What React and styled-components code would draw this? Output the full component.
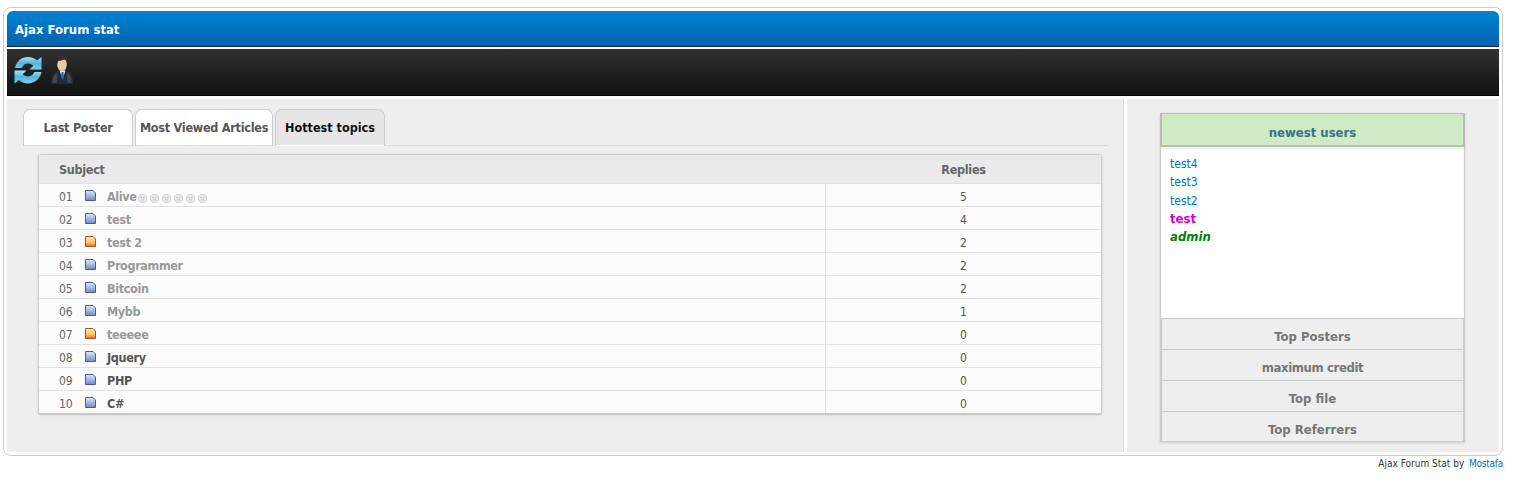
import React from "react";
import styled, { createGlobalStyle } from "styled-components";

const Global = createGlobalStyle`
  html, body { margin: 0; padding: 0; background: #fff; }
  body { font-family: "DejaVu Sans", "Liberation Sans", sans-serif; font-stretch: condensed; font-size: 12px; color: #555; }
`;
const Page = styled.div`width: 1500px; margin: 7px 0 0 3px;`;
const Frame = styled.div`
  border: 1px solid #ccc; border-radius: 8px; padding: 3px; background: #fff;
  box-sizing: border-box; height: 449px; display: flex; flex-direction: column;
`;
const Header = styled.div`
  height: 35px; border-bottom: 1px solid #0a2a40; border-radius: 6px 6px 0 0;
  background: linear-gradient(#0083d6, #0063ad); color: #fff; font-weight: bold; font-size: 13px;
  line-height: 37px; padding-left: 8px; flex: none;
`;
const Toolbar = styled.div`
  height: 40px; margin-top: 2px; flex: none; border-bottom: 1px solid #000;
  background: linear-gradient(#303030 0%, #262626 35%, #1c1c1c 60%, #141414 100%);
  display: flex; align-items: flex-start; padding: 6px 0 0 6px; gap: 8px;
`;
const Content = styled.div`margin-top: 3px; flex: 1; display: flex; min-height: 0;`;
const Main = styled.div`
  background: #eee; border-right: 1px solid #ddd; padding: 10px 15px 0 16px; box-sizing: border-box; width: 1117px; flex: none;
`;
const TabBar = styled.div`
  display: flex; gap: 2px; height: 36px; border-bottom: 1px solid #ddd; align-items: flex-end;
`;
const Tab = styled.div`
  box-sizing: border-box; width: ${p => p.$w}px; height: 37px; margin-bottom: -1px;
  border: 1px solid #ccc; border-bottom: ${p => (p.$active ? "1px solid #fff" : "1px solid #ddd")}; border-radius: 7px 7px 0 0;
  background: ${p => (p.$active ? "#e6e6e6" : "#fff")}; color: ${p => (p.$active ? "#111" : "#555")};
  font-weight: bold; font-size: 12.5px; letter-spacing: ${p => (p.$active ? "0" : "-0.25px")}; line-height: 36px; text-align: center; white-space: nowrap;
`;
const Table = styled.div`
  margin: 8px 0 0 15px; width: 1064px; box-sizing: border-box; border: 1px solid #ccc; border-radius: 3px;
  box-shadow: 0 1px 2px #bbb; background: #fcfcfc;
`;
const Head = styled.div`
  display: flex; height: 28px; background: #eaeaea; font-weight: bold; font-size: 12.5px; letter-spacing: -0.3px; color: #666; line-height: 29px;
`;
const SubjectHead = styled.div`width: 787px; padding-left: 20px; box-sizing: border-box; flex: none;`;
const RepliesHead = styled.div`flex: 1; text-align: center;`;
const Row = styled.div`
  display: flex; height: 23px; box-sizing: border-box; border-top: 1px solid #e2e2e2; line-height: 26px;
  background: #fcfcfc;
`;
const Subject = styled.div`
  width: 787px; flex: none; box-sizing: border-box; padding-left: 20px; display: flex; align-items: flex-start; border-right: 1px solid #e2e2e2;
`;
const Num = styled.span`width: 26px; flex: none; color: #666; font-size: 12px;`;
const Title = styled.span`
  margin-left: 11px; font-weight: bold; font-size: 12.5px; letter-spacing: -0.35px; color: ${p => (p.$visited ? "#999" : "#555")};
`;
const Count = styled.div`flex: 1; text-align: center; color: #555; font-size: 12px;`;
const Smileys = styled.span`display: inline-flex; gap: 3px; margin: 10px 0 0 1px;`;
const Side = styled.div`
  margin-left: 3px; flex: 1; background: #eee; padding: 14px 34px 0 33px;
`;
const Box = styled.div`width: 305px; box-sizing: border-box; box-shadow: 0 1px 2px #ccc;`;
const BoxHead = styled.div`
  height: 34px; box-sizing: border-box; border: 2px solid #bbb; border-width: 1px 2px 2px; background: #ceebc6; color: #3f7085; font-weight: bold; font-size: 13px;
  text-align: center; line-height: 37px;
`;
const BoxBody = styled.div`
  height: 171px; box-sizing: border-box; background: #fff; border: 1px solid #ccc; border-width: 0 1px; padding: 8px 9px;
  display: flex; flex-direction: column; box-shadow: inset 0 2px 2px #eee;
`;
const UserLink = styled.a`
  height: 18.3px; line-height: 18px; font-size: ${p => (p.$color ? "13px" : "12px")}; color: ${p => p.$color || "#0072bc"};
  font-weight: ${p => (p.$color ? "bold" : "normal")}; font-style: ${p => (p.$italic ? "italic" : "normal")};
`;
const Item = styled.div`
  height: 31px; box-sizing: border-box; background: #eee; border: 1px solid #ccc; border-width: 1px 2px 0; color: #777;
  font-weight: bold; font-size: 13px; letter-spacing: ${p => (p.$tight ? "-0.4px" : "0")}; text-align: center; line-height: 35px;
  &:last-child { border-bottom-width: 1px; }
`;
const Footer = styled.div`
  text-align: right; font-size: 10px; color: #333; margin-top: 1px; line-height: 14px; height: 14px;
  a { color: #0072bc; letter-spacing: -0.25px; margin-left: 2px; }
`;

const RefreshIcon = () => (
  <svg width="30" height="30" viewBox="0 0 30 30" style={{ flex: "none" }}>
    <defs>
      <linearGradient id="rf" x1="0" y1="0" x2="0" y2="1">
        <stop offset="0" stopColor="#a4e4f6" />
        <stop offset="0.5" stopColor="#4fb4dc" />
        <stop offset="1" stopColor="#7fd0ec" />
      </linearGradient>
    </defs>
    <path d="M2 13C3 6.500 8.500 2 15 2c3.600 0 6.700 1.300 9 3.500L28.500 2v12.500H16.500l3.800-3.800C18.900 9.400 17 8.600 15 8.600c-3 0-5.500 1.900-6.200 4.400z" fill="url(#rf)" />
    <path d="M28.500 17C27.500 23.500 21.500 28.500 15 28.500c-3.600 0-6.700-1.300-9-3.500l-4.500 3.500V15.500h12l-3.800 3.800c1.400 1.300 3.300 2.100 5.300 2.100 3 0 5.500-1.900 6.200-4.400z" fill="url(#rf)" />
  </svg>
);
const UserIcon = () => (
  <svg width="24" height="30" viewBox="0 0 24 30" style={{ flex: "none" }}>
    <path d="M0 29c-.5-5 .5-9.500 4-11.500l5-2.500h5l5 2.500c2.500 1.500 3 6 3 11.500z" fill="#222b33" />
    <path d="M1.500 28c0-4 1-7.500 3-9l2-1-1 10zM20.500 28c0-4-1-7.500-3-9l-2-1 1 10z" fill="#3d4a55" />
    <path d="M8.500 15.500l3 9 3-9z" fill="#dfe6ea" />
    <path d="M10.500 17h2l.6 4.500-1.600 3-1.600-3z" fill="#1678c4" />
    <ellipse cx="11" cy="9.500" rx="4.800" ry="6.700" fill="#e9cbaa" />
    <path d="M6 10C4 3.500 8.500.5 12 .5c4 0 5.500 3.500 4.500 9-.5-3-1.500-4.500-3-5-2 1-5 1.200-6.200 1.700-.8 1-1.100 2.200-1.300 3.800z" fill="#2b3238" />
  </svg>
);
const DocIcon = ({ hot }) => (
  <svg width="11" height="11" viewBox="0 0 11 11" style={{ flex: "none", marginTop: 6 }}>
    <defs>
      <linearGradient id="docB" x1="0" y1="0" x2="0" y2="1"><stop offset="0" stopColor="#e2eafa" /><stop offset="1" stopColor="#7088c8" /></linearGradient>
      <linearGradient id="docH" x1="0" y1="0" x2="0" y2="1"><stop offset="0" stopColor="#fff2a0" /><stop offset="0.6" stopColor="#ffc26a" /><stop offset="1" stopColor="#ee5f36" /></linearGradient>
    </defs>
    <path d="M.5.5h7.500l2.500 2.500v7.500H.5z" fill={hot ? "url(#docH)" : "url(#docB)"} stroke={hot ? "#a8552f" : "#4a5a9a"} strokeWidth="1" />
  </svg>
);
const Sad = () => (
  <svg width="9" height="9" viewBox="0 0 10 10" style={{ flex: "none" }}>
    <circle cx="5" cy="5" r="4.500" fill="#eee" stroke="#c8c8c8" />
    <circle cx="3.500" cy="4" r=".7" fill="#999" />
    <circle cx="6.500" cy="4" r=".7" fill="#999" />
    <path d="M3.200 7.200c1-1 2.600-1 3.600 0" fill="none" stroke="#999" strokeWidth=".7" />
  </svg>
);

const rows = [
  ["01", "Alive", false, 5, true, true],
  ["02", "test", false, 4, true],
  ["03", "test 2", true, 2, true],
  ["04", "Programmer", false, 2, true],
  ["05", "Bitcoin", false, 2, true],
  ["06", "Mybb", false, 1, true],
  ["07", "teeeee", true, 0, true],
  ["08", "Jquery", false, 0, false],
  ["09", "PHP", false, 0, false],
  ["10", "C#", false, 0, false],
];

export default function App() {
  return (
    <Page>
      <Global />
      <Frame>
        <Header>Ajax Forum stat</Header>
        <Toolbar>
          <RefreshIcon />
          <UserIcon />
        </Toolbar>
        <Content>
          <Main>
            <TabBar>
              <Tab $w={110}>Last Poster</Tab>
              <Tab $w={138}>Most Viewed Articles</Tab>
              <Tab $w={110} $active>Hottest topics</Tab>
            </TabBar>
            <Table>
              <Head>
                <SubjectHead>Subject</SubjectHead>
                <RepliesHead>Replies</RepliesHead>
              </Head>
              {rows.map(([n, t, hot, c, v, s]) => (
                <Row key={n}>
                  <Subject>
                    <Num>{n}</Num>
                    <DocIcon hot={hot} />
                    <Title $visited={v}>{t}</Title>
                    {s && <Smileys>{[0, 1, 2, 3, 4, 5].map(i => <Sad key={i} />)}</Smileys>}
                  </Subject>
                  <Count>{c}</Count>
                </Row>
              ))}
            </Table>
          </Main>
          <Side>
            <Box>
              <BoxHead>newest users</BoxHead>
              <BoxBody>
                <UserLink>test4</UserLink>
                <UserLink>test3</UserLink>
                <UserLink>test2</UserLink>
                <UserLink $color="#d400cc">test</UserLink>
                <UserLink $color="#008000" $italic>admin</UserLink>
              </BoxBody>
              <Item>Top Posters</Item>
              <Item $tight>maximum credit</Item>
              <Item>Top file</Item>
              <Item>Top Referrers</Item>
            </Box>
          </Side>
        </Content>
      </Frame>
      <Footer>Ajax Forum Stat by <a>Mostafa</a></Footer>
    </Page>
  );
}
